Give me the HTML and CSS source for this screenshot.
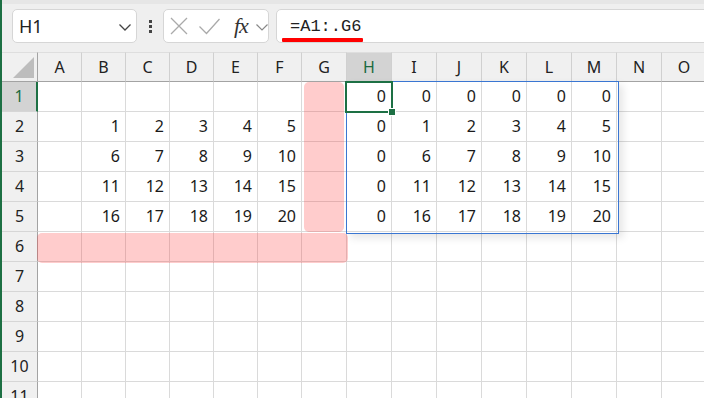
FILE: index.html
```html
<!DOCTYPE html>
<html lang="ja">
<head>
  <meta charset="UTF-8">
  <meta name="viewport" content="width=device-width, initial-scale=1.0">
  <title>Excel - スピル</title>
  <link rel="stylesheet" href="styles.css">
</head>
<body>

<div class="window">
  <div class="toolbar">
    <div class="namebox">
      <span class="cellref">H1</span>
      <svg class="chev" width="12" height="7" viewBox="0 0 12 7"><polyline points="0.5,0.5 6,6 11.5,0.5" fill="none" stroke="#444" stroke-width="1.3"/></svg>
    </div>
    <div class="dots"><i></i><i></i><i></i></div>
    <div class="fxbox">
      <svg width="18" height="18" viewBox="0 0 18 18"><path d="M1 1 L17 17 M17 1 L1 17" stroke="#aaa" stroke-width="1.3" fill="none"/></svg>
      <svg width="21" height="17" viewBox="0 0 21 17"><polyline points="0.5,8.5 7.5,15.5 20.5,1" stroke="#aaa" stroke-width="1.3" fill="none"/></svg>
      <span class="fx">fx</span>
      <svg width="12" height="7" viewBox="0 0 12 7"><polyline points="0.5,0.5 6,6 11.5,0.5" fill="none" stroke="#888" stroke-width="1.2"/></svg>
    </div>
    <div class="formula">
      <span class="ftext">=A1:.G6</span>
      <div class="underline"></div>
    </div>
  </div>

  <div class="sheet">
    <div class="corner"><span class="tri"></span></div>
    <div class="ch">A</div><div class="ch">B</div><div class="ch">C</div><div class="ch">D</div><div class="ch">E</div><div class="ch">F</div><div class="ch">G</div><div class="ch sel">H</div><div class="ch">I</div><div class="ch">J</div><div class="ch">K</div><div class="ch">L</div><div class="ch">M</div><div class="ch">N</div><div class="ch">O</div>

    <div class="rh sel">1</div>
    <div></div><div></div><div></div><div></div><div></div><div></div><div></div>
    <div>0</div><div>0</div><div>0</div><div>0</div><div>0</div><div>0</div><div></div><div></div>

    <div class="rh">2</div>
    <div></div><div>1</div><div>2</div><div>3</div><div>4</div><div>5</div><div></div>
    <div>0</div><div>1</div><div>2</div><div>3</div><div>4</div><div>5</div><div></div><div></div>

    <div class="rh">3</div>
    <div></div><div>6</div><div>7</div><div>8</div><div>9</div><div>10</div><div></div>
    <div>0</div><div>6</div><div>7</div><div>8</div><div>9</div><div>10</div><div></div><div></div>

    <div class="rh">4</div>
    <div></div><div>11</div><div>12</div><div>13</div><div>14</div><div>15</div><div></div>
    <div>0</div><div>11</div><div>12</div><div>13</div><div>14</div><div>15</div><div></div><div></div>

    <div class="rh">5</div>
    <div></div><div>16</div><div>17</div><div>18</div><div>19</div><div>20</div><div></div>
    <div>0</div><div>16</div><div>17</div><div>18</div><div>19</div><div>20</div><div></div><div></div>

    <div class="rh">6</div>
    <div></div><div></div><div></div><div></div><div></div><div></div><div></div><div></div><div></div><div></div><div></div><div></div><div></div><div></div><div></div>

    <div class="rh">7</div>
    <div></div><div></div><div></div><div></div><div></div><div></div><div></div><div></div><div></div><div></div><div></div><div></div><div></div><div></div><div></div>

    <div class="rh">8</div>
    <div></div><div></div><div></div><div></div><div></div><div></div><div></div><div></div><div></div><div></div><div></div><div></div><div></div><div></div><div></div>

    <div class="rh">9</div>
    <div></div><div></div><div></div><div></div><div></div><div></div><div></div><div></div><div></div><div></div><div></div><div></div><div></div><div></div><div></div>

    <div class="rh">10</div>
    <div></div><div></div><div></div><div></div><div></div><div></div><div></div><div></div><div></div><div></div><div></div><div></div><div></div><div></div><div></div>

    <div class="rh">11</div>
    <div></div><div></div><div></div><div></div><div></div><div></div><div></div><div></div><div></div><div></div><div></div><div></div><div></div><div></div><div></div>

    <!-- overlays -->
    <span class="mark mark-col"></span>
    <span class="mark mark-row"></span>
    <span class="spill"></span>
    <span class="active"><i class="handle"></i></span>
  </div>
</div>

</body>
</html>
```

FILE: styles.css
```css
body {
  margin: 0;
  background-color: #ffffff;
  font-family: "Noto Sans", "Noto Sans CJK JP", sans-serif;
  overflow: hidden;
}

.window {
  border-left: 2px solid #1d7044;
  height: 398px;
  overflow: hidden;
}

.toolbar {
  background-color: #efefef;
  height: 52px;
  box-sizing: border-box;
  padding: 9px 0 0 10px;
  display: flex;
  align-items: flex-start;
  border-top: 4px solid #e6e6e6;
  padding-top: 5px;
}

.namebox,
.fxbox,
.formula {
  background-color: #fff;
  border: 1px solid #d6d6d6;
  border-radius: 5px;
  height: 34px;
  box-sizing: border-box;
  display: flex;
  align-items: center;
}

.namebox {
  width: 125px;
  padding: 0 5px 0 6px;
  justify-content: space-between;
}

.cellref {
  font-size: 18px;
  color: #222;
}

.chev {
  margin-top: 2px;
}

.dots {
  width: 26px;
  display: flex;
  flex-direction: column;
  align-items: center;
  gap: 2px;
  padding-top: 11px;
}

.dots i {
  display: block;
  width: 3px;
  height: 3px;
  background-color: #444;
}

.fxbox {
  width: 106px;
  padding-left: 6px;
  gap: 0;
}

.fxbox svg:nth-child(2) {
  margin-left: 11px;
}

.fx {
  font-family: "Liberation Serif", serif;
  font-style: italic;
  font-size: 22px;
  color: #333;
  margin-left: 14px;
  line-height: 1;
  letter-spacing: -1px;
}

.fxbox svg:last-child {
  margin-left: 8px;
  margin-top: 2px;
}

.formula {
  flex: 1;
  margin-left: 7px;
  margin-right: -8px;
  padding-left: 13px;
  position: relative;
}

.ftext {
  font-family: "Liberation Mono", monospace;
  font-size: 17px;
  color: #222;
}

.underline {
  position: absolute;
  left: 5px;
  top: 28px;
  width: 81px;
  height: 4px;
  background-color: #ff0000;
  border-radius: 1px;
}

/* sheet */
.sheet {
  position: relative;
  display: grid;
  grid-template-columns: 36px repeat(6, 44px) repeat(9, 45px);
  grid-auto-rows: 30px;
  font-size: 16px;
  color: #1a1a1a;
}

.sheet > div {
  box-sizing: border-box;
  border-right: 1px solid #dadada;
  border-bottom: 1px solid #dadada;
  text-align: right;
  padding-right: 5px;
  line-height: 29px;
}

.sheet > .ch {
  background-color: #f0f0f0;
  text-align: center;
  padding: 0;
  border-right-color: #d0d0d0;
  border-bottom-color: #a3a3a3;
  border-top: 1px solid #dedede;
  line-height: 28px;
  color: #222;
}

.sheet > .rh {
  background-color: #f0f0f0;
  text-align: center;
  padding: 0;
  border-right-color: #a3a3a3;
  border-bottom-color: #d6d6d6;
  color: #222;
}

.sheet > .sel {
  background-color: #d3d3d3;
  color: #1d6b41;
}

.sheet > .rh.sel {
  border-right: 2px solid #1d7044;
}

.sheet > .corner {
  background-color: #f0f0f0;
  border-right-color: #a3a3a3;
  border-bottom-color: #a3a3a3;
  border-top: 1px solid #dedede;
  position: relative;
}

.tri {
  position: absolute;
  right: 3px;
  bottom: 3px;
  width: 0;
  height: 0;
  border-left: 21px solid transparent;
  border-bottom: 21px solid #bdbdbd;
}

.mark {
  position: absolute;
  background-color: rgba(255, 40, 40, 0.24);
  border-radius: 5px;
  filter: blur(0.6px);
}

.mark-col {
  left: 302px;
  top: 30px;
  width: 40px;
  height: 150px;
}

.mark-row {
  left: 35px;
  top: 181px;
  width: 311px;
  height: 30px;
}

.spill {
  position: absolute;
  left: 344px;
  top: 29px;
  width: 271px;
  height: 151px;
  border: 1px solid #3a76d2;
  box-shadow: 4px 4px 8px rgba(0, 0, 0, 0.1);
}

.active {
  position: absolute;
  left: 343px;
  top: 29px;
  width: 48px;
  height: 32px;
  box-sizing: border-box;
  border: 2px solid #1d7044;
}

.handle {
  position: absolute;
  right: -5px;
  bottom: -5px;
  width: 6px;
  height: 6px;
  background-color: #1d7044;
  border: 1px solid #fff;
}
```
